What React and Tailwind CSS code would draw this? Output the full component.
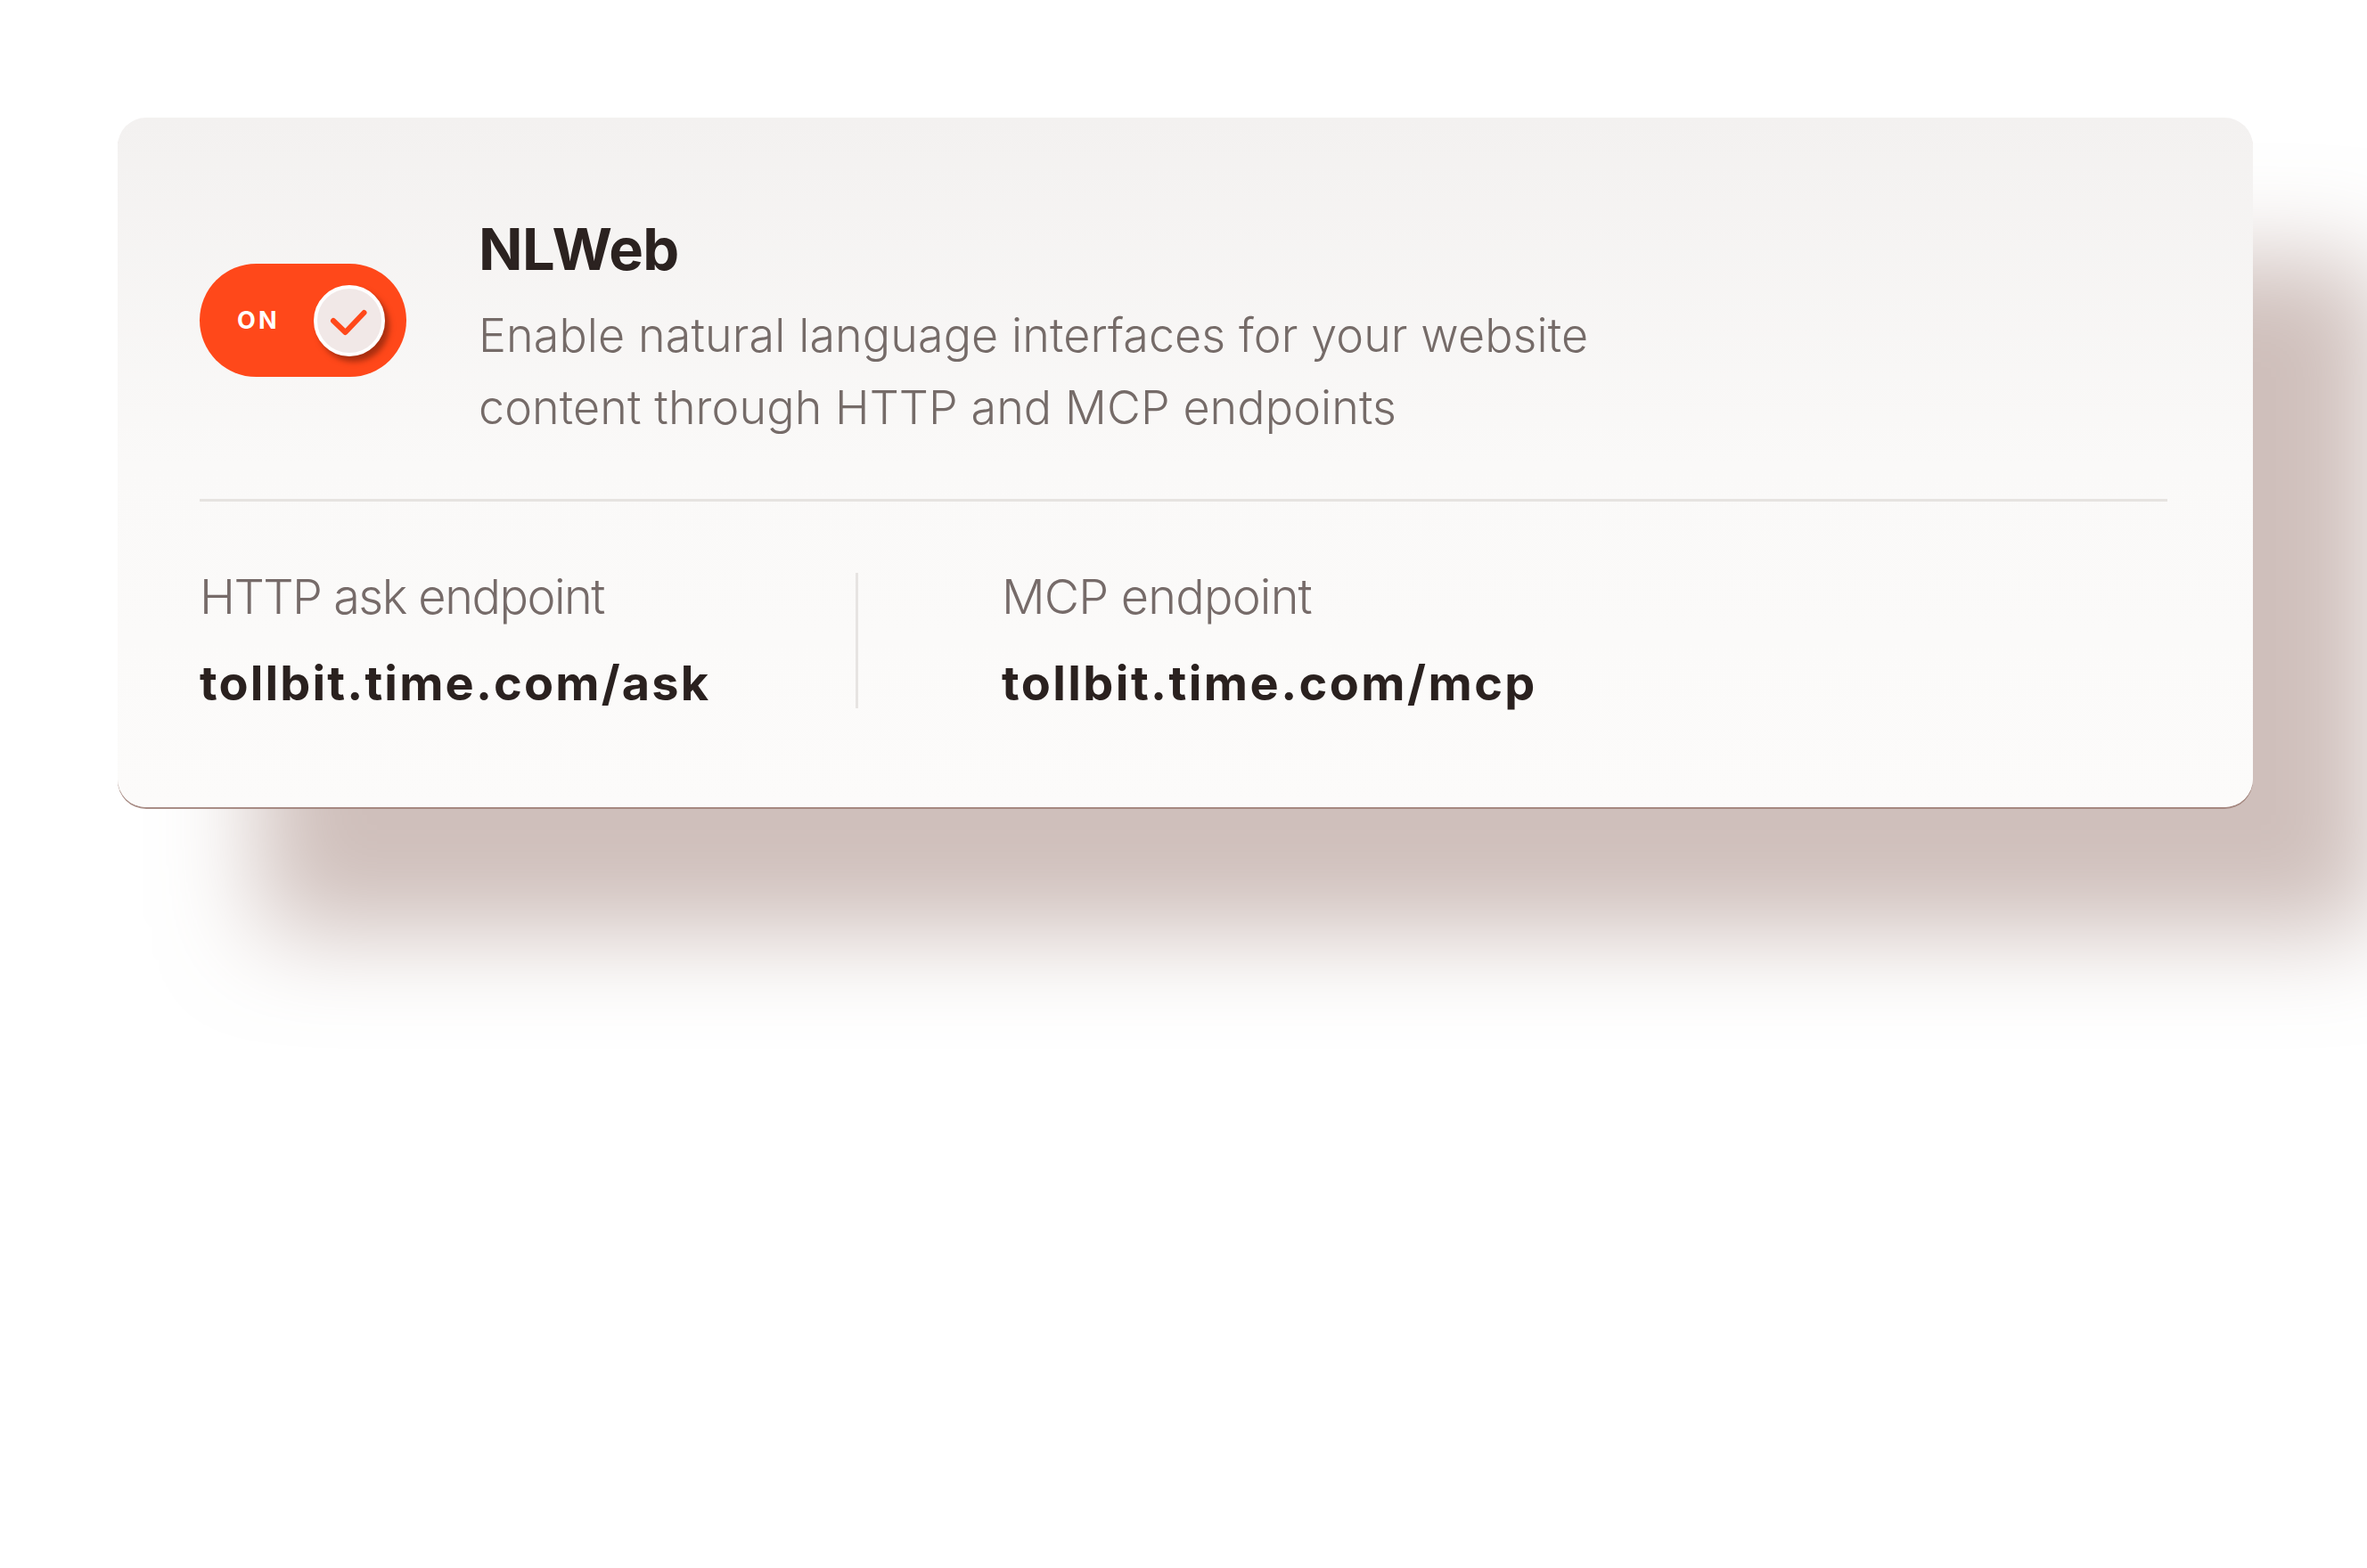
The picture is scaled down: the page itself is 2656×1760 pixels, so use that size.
export default function App() {
  return (
    <div className="min-h-screen bg-white pt-[132px] pl-[132px] font-['Inter',sans-serif]">
      {/* Card */}
      <div className="w-[2396px] h-[774px] rounded-[32px] bg-gradient-to-b from-[#f3f1f0] via-[#faf9f8] to-[#fcfbfa] pt-[108px] pl-[92px] pr-[96px] shadow-[0_2px_0_rgba(160,130,122,0.9),150px_150px_110px_-10px_rgba(160,128,120,0.5)]">
        {/* Top row */}
        <div className="flex items-start">
          {/* Toggle */}
          <div className="mt-[56px] flex h-[127px] w-[232px] shrink-0 items-center rounded-full bg-[#ff481a] pl-[42px] pr-[24px]">
            <span className="text-[27px] font-bold leading-none tracking-[0.12em] text-white">ON</span>
            <div className="ml-auto flex h-[80px] w-[80px] items-center justify-center rounded-full border-[4px] border-white bg-[#f1e8e7] shadow-[5px_6px_6px_rgba(110,30,10,0.6)]">
              <svg width="80" height="80" viewBox="0 0 80 80" className="shrink-0" fill="none">
                <path d="M22 40 L35.5 53 L56.5 31" stroke="#ff481a" strokeWidth="6" strokeLinecap="round" strokeLinejoin="round" />
              </svg>
            </div>
          </div>

          {/* Title + description */}
          <div className="ml-[81px]">
            <h1 className="text-[65px] font-bold leading-[80px] tracking-[-0.01em] text-[#2b2220]">NLWeb</h1>
            <p className="mt-[16px] text-[52px] font-light leading-[81px] tracking-[0.002em] text-[#756b68]">
              Enable natural language interfaces for your website
              <br />
              content through HTTP and MCP endpoints
            </p>
          </div>
        </div>

        {/* Separator */}
        <div className="mt-[62px] h-[3px] bg-[#e6e3e0]" />

        {/* Endpoints */}
        <div className="flex items-start pt-[75px]">
          <div className="w-[736px]">
            <div className="text-[54px] font-light leading-[64px] tracking-[-0.028em] text-[#766b69]">HTTP ask endpoint</div>
            <div className="mt-[33px] text-[54px] font-bold leading-[64px] tracking-[0.04em] text-[#2a211f]">tollbit.time.com/ask</div>
          </div>
          <div className="mt-[5px] h-[152px] w-[3px] bg-[#e7e4e2]" />
          <div className="pl-[161px]">
            <div className="text-[54px] font-light leading-[64px] tracking-[-0.015em] text-[#766b69]">MCP endpoint</div>
            <div className="mt-[33px] text-[54px] font-bold leading-[64px] tracking-[0.045em] text-[#2a211f]">tollbit.time.com/mcp</div>
          </div>
        </div>
      </div>
    </div>
  )
}
